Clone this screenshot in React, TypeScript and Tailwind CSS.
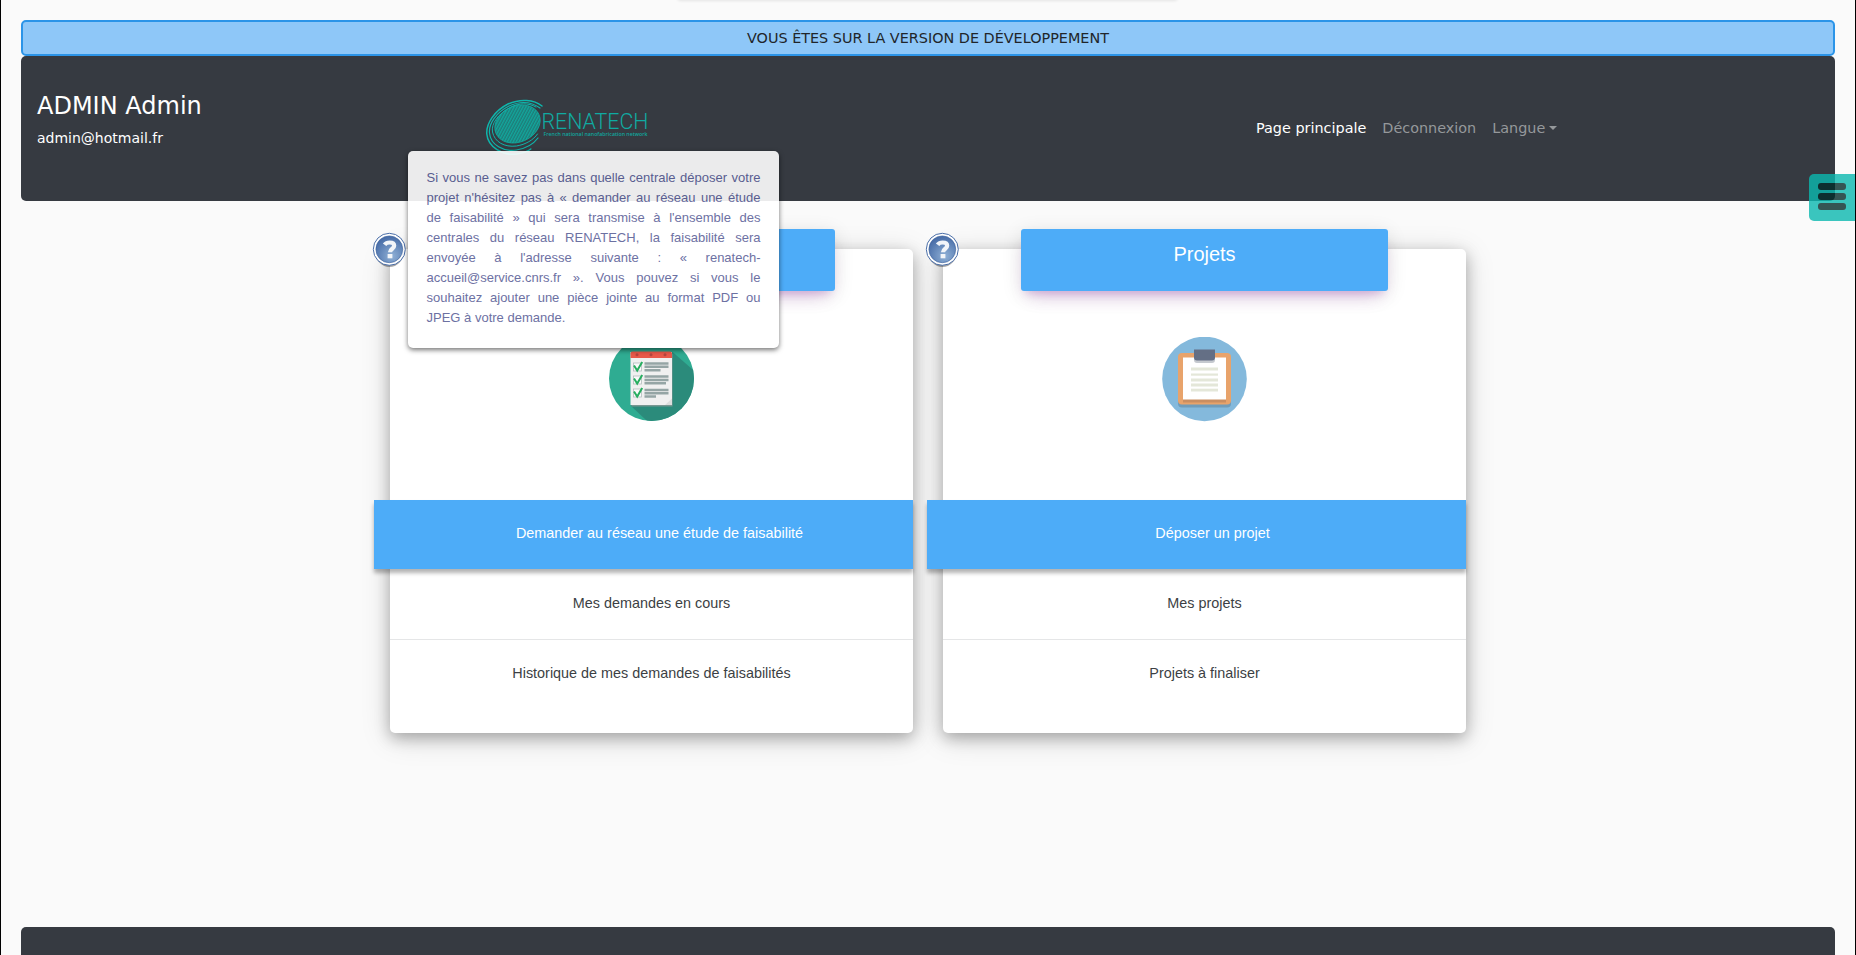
import React from "react";

function HelpIcon({ id }: { id: string }) {
  return (
    <svg className="absolute -left-[18px] -top-[17px] h-[36px] w-[35px]" viewBox="0 0 35 36">
      <defs>
        <radialGradient id={id} cx="60%" cy="75%" r="75%">
          <stop offset="0" stopColor="#8fb0d6" />
          <stop offset="1" stopColor="#466ba6" />
        </radialGradient>
      </defs>
      <ellipse cx="17.5" cy="20.5" rx="14" ry="14.5" fill="#000" opacity=".35" />
      <circle cx="17.3" cy="17.3" r="16" fill="#fff" stroke="#4a6ea8" strokeWidth="1" />
      <circle cx="17.3" cy="17.3" r="13.4" fill={`url(#${id})`} stroke="#3c619c" strokeWidth=".6" />
      <path d="M12.600 12.800c1.400-1.900 3-2.300 5-2.300 3 0 4.600 1.300 4.600 3.300 0 3-4.200 3-4.200 6.500" fill="none" stroke="#f2f5f9" strokeWidth="4.200" />
      <rect x="15.600" y="22" width="4.800" height="4.300" fill="#f2f5f9" />
    </svg>
  );
}

function ChecklistIcon() {
  return (
    <svg className="-mt-px h-[85px] w-[85px]" viewBox="0 0 85 85">
      <defs>
        <clipPath id="disc">
          <circle cx="42.500" cy="42.500" r="42.500" />
        </clipPath>
      </defs>
      <g clipPath="url(#disc)">
        <rect width="85" height="85" fill="#2fac92" />
        <path d="M63 15.500 100 48v50H52L22 70Z" fill="#2b8b7b" />
        <path d="M22.500 18h41v52.500h-41Z" fill="#8c9a98" opacity=".8" />
        <path d="M21.500 16h41.500v53h-41.500Z" fill="#f0f0f0" />
        <path d="M21.500 17.500q0-2 2-2h37.500q2 0 2 2v4.500h-41.500Z" fill="#e8594a" />
        <g fill="#b4463f">
          <circle cx="28" cy="18.700" r="1.500" />
          <circle cx="42" cy="18.700" r="1.500" />
          <circle cx="56" cy="18.700" r="1.500" />
        </g>
        <path d="M63 62.500V69H56Z" fill="#dcdddd" />
        {[26.500, 39.500, 52.500].map((y) => (
          <g key={y}>
            <rect x="24.500" y={y + 0.500} width="8" height="8" fill="#fafafa" stroke="#b4bcbd" strokeWidth=".8" />
            <path d={`M25 ${y + 3}l3.200 5 5-8.500`} fill="none" stroke="#27ae60" strokeWidth="2" />
          </g>
        ))}
        <path
          d="M35.500 27.500h24M35.500 30.800h24M35.500 34.300h16M35.500 40.500h24M35.500 44h24M35.500 47.300h21.500M35.500 54h24M35.500 57.300h24M35.500 60.500h11.500"
          stroke="#95a5a5"
          strokeWidth="2.400"
        />
      </g>
    </svg>
  );
}

function ClipboardIcon() {
  return (
    <svg className="h-[85px] w-[85px]" viewBox="0 0 85 85">
      <circle cx="42.500" cy="42" r="42.300" fill="#84b9dc" />
      <rect x="16" y="19.500" width="53" height="51" rx="4" fill="#6f9cba" />
      <rect x="16" y="16" width="53" height="51.500" rx="4" fill="#e8a36b" />
      <rect x="21" y="21" width="43" height="44.500" fill="#ca8e61" />
      <rect x="21" y="20.500" width="43" height="42" fill="#fff" />
      <rect x="32" y="17" width="21" height="9" rx="3" fill="#c5c9cf" />
      <path d="M32 12.500h21v8q0 3-3 3H35q-3 0-3-3Z" fill="#646f85" />
      <g fill="#e4e7d9">
        <rect x="29" y="30.500" width="27" height="3" />
        <rect x="29" y="36.500" width="27" height="2.200" />
        <rect x="29" y="41.500" width="27" height="3" />
        <rect x="29" y="46.500" width="27" height="3" />
        <rect x="29" y="51.700" width="27" height="2.800" />
      </g>
    </svg>
  );
}

function Logo() {
  return (
    <svg className="h-[58px] w-[170px] overflow-visible" viewBox="0 0 170 58">
      <defs>
        <pattern id="hatch" width="2.600" height="2.600" patternUnits="userSpaceOnUse" patternTransform="rotate(52)">
          <rect width="2.600" height="2.600" fill="#1f7b77" />
          <rect width="1.300" height="2.600" fill="#12a79d" />
        </pattern>
      </defs>
      <ellipse cx="30.500" cy="24" rx="23.500" ry="18" transform="rotate(-24 30.500 24)" fill="url(#hatch)" stroke="#12a79d" strokeWidth=".8" />
      <g fill="none" stroke="#0fb5ab" strokeLinecap="round" transform="translate(-1 -1)">
        <path d="M56 7C48 .5 34-.5 22 5 8 12 0 25 .8 35c1 13 16 22 30 20 6-1 11-2.500 14-5" strokeWidth="1.500" />
        <path d="M54 9C45 2.500 34 2 23 7 10 13.500 2.500 25 3.500 34c1 12 14 19 27 17 9-1.500 17-6 21.500-12" strokeWidth="1.200" />
        <path d="M50 8C42 3.500 33 4 25 8 12 14.500 5 25 6.500 33c2 10 12 15.500 24 14 9-1.500 17-6 21-12" strokeWidth="1" />
      </g>
      <text x="54.500" y="28.500" textLength="107" lengthAdjust="spacingAndGlyphs" className="fill-[#10aaa1] [font-family:Roboto,sans-serif] text-[22px] font-light">RENATECH</text>
      <text x="56.500" y="36.300" textLength="104" lengthAdjust="spacingAndGlyphs" className="fill-[#10a69e] [font-family:'Open_Sans',sans-serif] text-[5.800px] font-semibold">French national nanofabrication network</text>
    </svg>
  );
}

function Card({ id, title, icon, items }: { id: string; title: string; icon: React.ReactNode; items: string[] }) {
  return (
    <section className="relative flex h-[484px] w-[523px] flex-col rounded-[5px] bg-white text-center text-[14.4px] leading-[22px] shadow-[0_5px_15px_rgba(0,0,0,0.27),0_5px_30px_rgba(0,0,0,0.15)]">
      <HelpIcon id={id} />
      <h2 className="-mt-5 h-[62px] w-[367px] self-center rounded-[3px] bg-[#4dacf8] pt-[11px] text-[20px] leading-[28px] text-white shadow-[0_12px_20px_-10px_rgba(156,39,176,0.28),0_4px_20px_0_rgba(0,0,0,0.12),0_7px_8px_-5px_rgba(156,39,176,0.2)]">
        {title}
      </h2>
      <div className="flex h-[209px] justify-center pt-[46px]">{icon}</div>
      <div className="-ml-4 flex h-[69px] items-start justify-center bg-[#4dacf8] pt-[22px] pl-8 text-white shadow-[0_4px_4px_rgba(0,0,0,0.3)]">{items[0]}</div>
      <div className="h-[71px] border-b border-[#e5e6e7] pt-[23px] text-[#3c3f44]">{items[1]}</div>
      <div className="pt-[22px] text-[#3c3f44]">{items[2]}</div>
    </section>
  );
}

export default function App() {
  return (
    <div className="relative flex h-[955px] w-[1856px] flex-col overflow-hidden border-x border-black bg-[#fafafa] px-5 pt-5 [font-family:'Liberation_Sans',sans-serif]">
      <div className="absolute -top-2 left-[676px] h-2 w-[501px] rounded bg-white shadow-[0_1px_3px_rgba(0,0,0,0.09)]" />
      <div className="flex h-9 shrink-0 items-center justify-center rounded-[5px] border-2 border-[#2b94e8] bg-[#8ec7f8] pt-0.5 text-[14.4px] text-[#212529] [font-family:'DejaVu_Sans',sans-serif]">
        VOUS ÊTES SUR LA VERSION DE DÉVELOPPEMENT
      </div>
      <header className="flex h-[145px] shrink-0 rounded-[5px] bg-[#363a41] pl-4 text-[14.4px] text-white [font-family:'DejaVu_Sans',sans-serif]">
        <div className="w-[450px] pt-[36px]">
          <h1 className="text-[24px] leading-[29px]">ADMIN Admin</h1>
          <p className="mt-[6px] text-sm leading-[22px]">admin@hotmail.fr</p>
        </div>
        <div className="w-[769px] pt-[44px]">
          <Logo />
        </div>
        <nav className="flex shrink-0 gap-4 pt-[61px] leading-[22px] whitespace-nowrap text-[#95989b]">
          <a className="text-white">Page principale</a>
          <a>Déconnexion</a>
          <a className="flex h-[22px] items-center gap-1">
            Langue
            <span className="border-x-4 border-t-4 border-x-transparent border-t-[#95989b]" />
          </a>
        </nav>
      </header>
      <main className="mt-12 flex h-[678px] shrink-0 gap-[30px] pl-[369px]">
        <Card
          id="help-a"
          title=""
          icon={<ChecklistIcon />}
          items={["Demander au réseau une étude de faisabilité", "Mes demandes en cours", "Historique de mes demandes de faisabilités"]}
        />
        <Card id="help-b" title="Projets" icon={<ClipboardIcon />} items={["Déposer un projet", "Mes projets", "Projets à finaliser"]} />
      </main>
      <footer className="h-[60px] shrink-0 rounded-[5px] bg-[#363a41]" />

      <div className="absolute left-[407px] top-[201px] h-[147px] w-[371px] rounded-b-[5px] bg-white" />
      <div className="absolute left-[407px] top-[151px] h-[197px] w-[371px] rounded-[5px] bg-white px-[18.500px] pt-[17px] text-justify text-[13px] leading-[20px] text-[#5d6299] opacity-90 shadow-[0_2px_5px_rgba(0,0,0,0.6)]">
        Si vous ne savez pas dans quelle centrale déposer votre projet n'hésitez pas à « demander au réseau une étude de faisabilité » qui sera transmise à l'ensemble des centrales du réseau RENATECH, la faisabilité sera envoyée à l'adresse suivante : « renatech-accueil@service.cnrs.fr ». Vous pouvez si vous le souhaitez ajouter une pièce jointe au format PDF ou JPEG à votre demande.
      </div>

      <button className="absolute right-0 top-[174px] flex h-[47px] w-[46px] flex-col gap-[3px] rounded-l-[5px] bg-[#0bb9b0] pt-[9px] pl-[9px] opacity-80">
        <span className="h-[7px] w-[28px] rounded-[3px] bg-[#042d2b]" />
        <span className="h-[7px] w-[28px] rounded-[3px] bg-[#042d2b]" />
        <span className="h-[7px] w-[28px] rounded-[3px] bg-[#042d2b]" />
      </button>
    </div>
  );
}
